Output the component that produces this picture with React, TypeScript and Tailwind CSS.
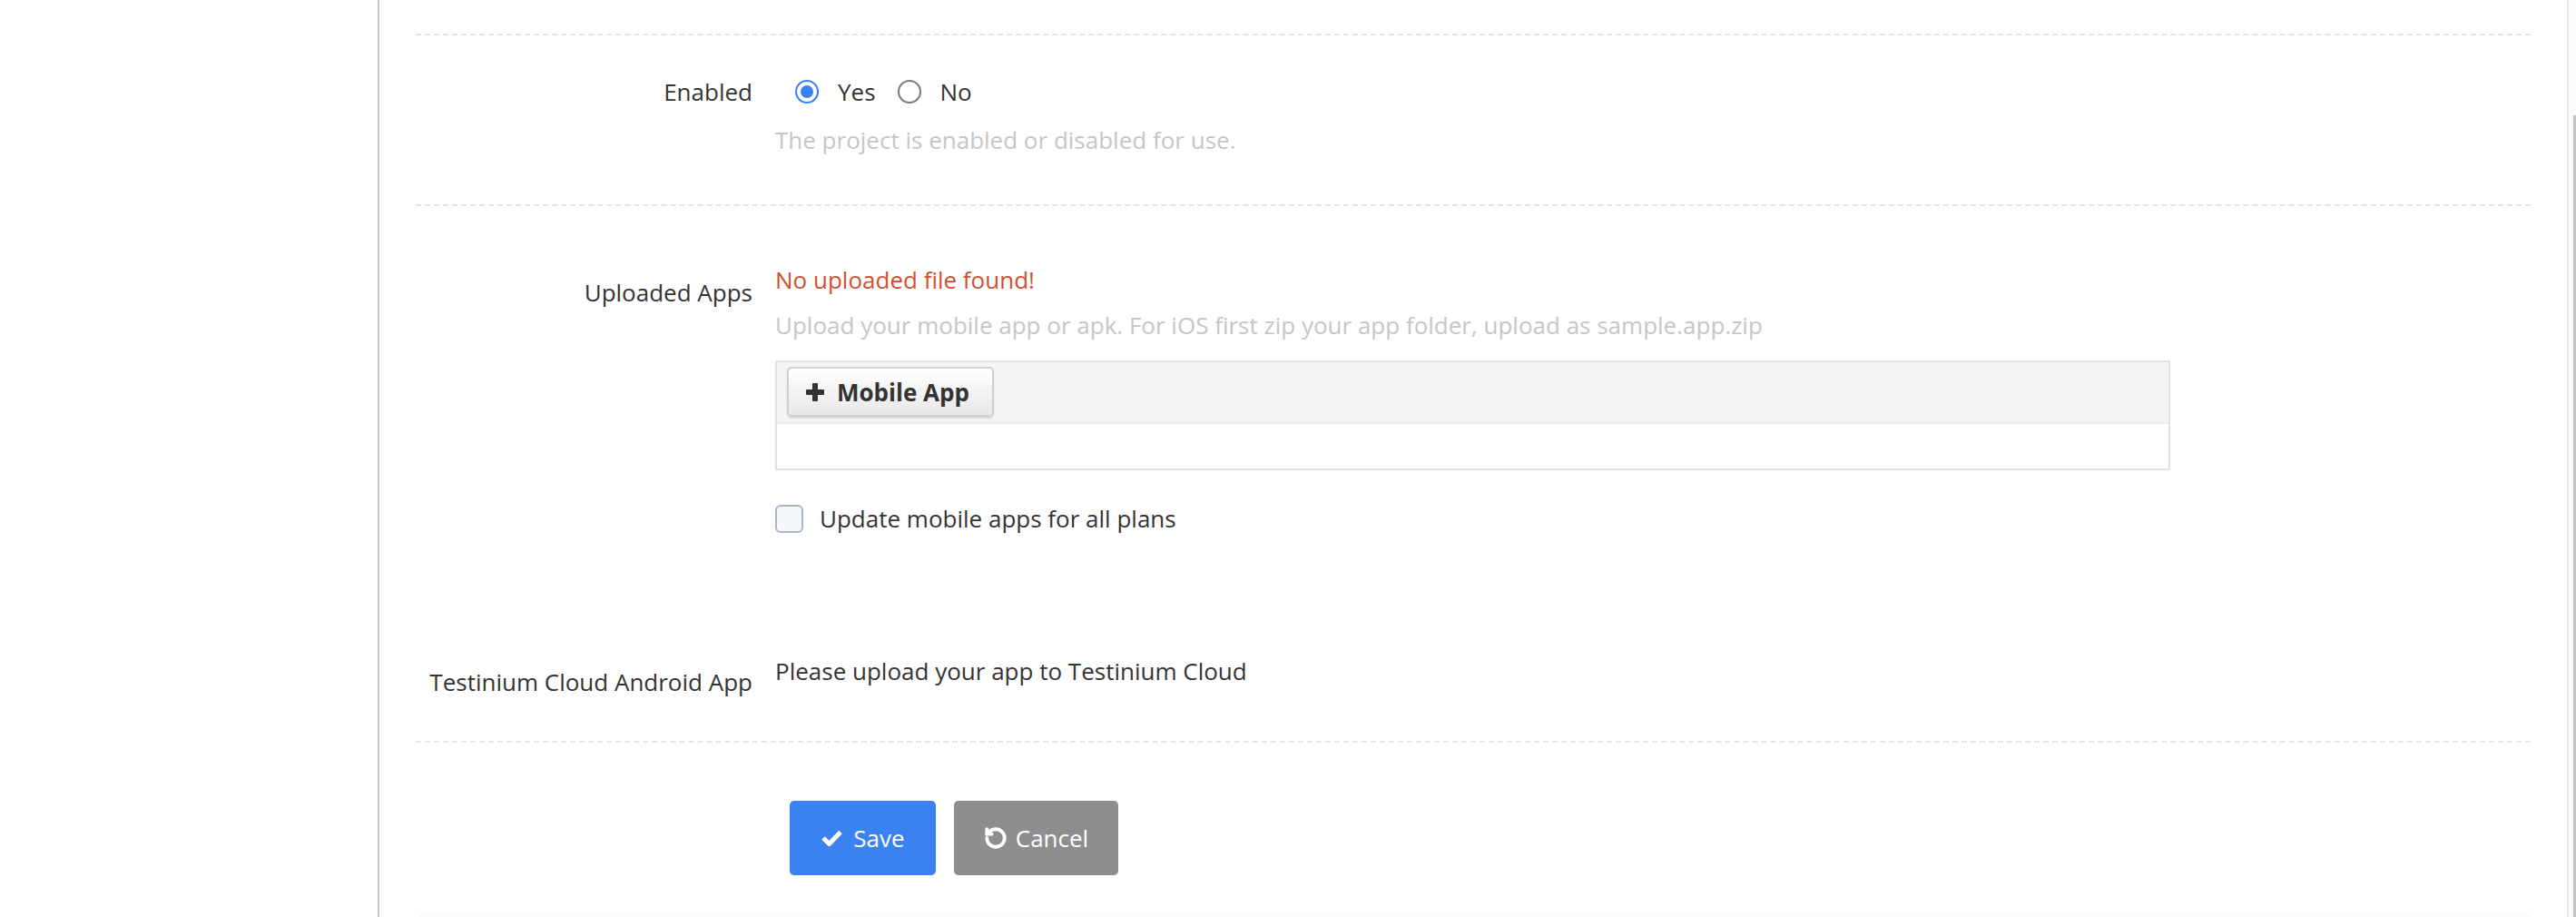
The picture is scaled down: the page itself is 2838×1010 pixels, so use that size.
import { RotateCcw } from 'lucide-react'

function Divider() {
  return <div className="border-b-2 border-dashed border-[#e6e6e6]" />
}

function Row({ label, labelOffset, children }: { label: string; labelOffset: string; children: React.ReactNode }) {
  return (
    <div className="flex gap-[25px]">
      <div className={`w-[371px] shrink-0 text-right ${labelOffset}`}>{label}</div>
      <div className="min-w-0 flex-1">{children}</div>
    </div>
  )
}

function Radio({ checked, label }: { checked?: boolean; label: string }) {
  return (
    <label className="flex items-center">
      <span
        className={`flex h-[26px] w-[26px] items-center justify-center rounded-full border-2 bg-white ${
          checked ? 'border-[#3b7ff2]' : 'border-[#7a7a7a]'
        }`}
      >
        {checked && <span className="h-[14px] w-[14px] rounded-full bg-[#3b7ff2]" />}
      </span>
      <span className="ml-[21px]">{label}</span>
    </label>
  )
}

export default function App() {
  return (
    <div className="flex h-[1010px] w-full overflow-hidden bg-white font-['Open_Sans',sans-serif] text-[26px] leading-[36px] text-[#333]">
      <aside className="w-[418px] shrink-0 border-r-2 border-[#c8c8c8] bg-white" />

      <main className="flex min-w-0 flex-1 flex-col px-[40px]">
        <div className="h-[37px]" />
        <Divider />

        {/* Enabled */}
        <div className="pt-[44px] pb-[53px]">
          <Row label="Enabled" labelOffset="">
            <div className="ml-[22px] flex items-center gap-[24px]">
              <Radio checked label="Yes" />
              <Radio label="No" />
            </div>
            <p className="mt-[17px] text-[#c6c6c6]">The project is enabled or disabled for use.</p>
          </Row>
        </div>
        <Divider />

        {/* Uploaded apps */}
        <div className="pt-[63px]">
          <Row label="Uploaded Apps" labelOffset="mt-[14px]">
            <p className="text-[#d2502f]">No uploaded file found!</p>
            <p className="mt-[14px] text-[#c6c6c6]">
              Upload your mobile app or apk. For iOS first zip your app folder, upload as sample.app.zip
            </p>
            <div className="mt-[21px] w-[1537px] border-2 border-[#e2e2e2]">
              <div className="h-[68px] border-b-2 border-[#ececec] bg-[#f4f4f4] px-[11px] pt-[5px]">
                <button className="flex h-[55px] w-[228px] items-center gap-[14px] rounded-[5px] border-2 border-[#d0d0d0] bg-gradient-to-b from-white to-[#e8e8e8] pl-[19px] font-bold text-[#333] shadow-[0_2px_2px_rgba(0,0,0,0.12)]">
                  <svg width="20" height="20" viewBox="0 0 20 20" fill="#333">
                    <rect x="7" y="0" width="6" height="20" rx="1" />
                    <rect x="0" y="7" width="20" height="6" rx="1" />
                  </svg>
                  Mobile App
                </button>
              </div>
              <div className="h-[49px] bg-white" />
            </div>
            <label className="mt-[35px] flex items-center gap-[18px]">
              <span className="h-[31px] w-[31px] rounded-[6px] border-2 border-[#aab6c6] bg-[#f4f7fc]" />
              <span>Update mobile apps for all plans</span>
            </label>
          </Row>
        </div>

        {/* Testinium cloud */}
        <div className="pt-[132px] pb-[47px]">
          <Row label="Testinium Cloud Android App" labelOffset="mt-[12px]">
            <p>Please upload your app to Testinium Cloud</p>
          </Row>
        </div>
        <Divider />

        <div className="flex gap-[20px] pt-[64px] pl-[412px]">
          <button className="flex h-[82px] w-[161px] items-center justify-center gap-[11px] rounded-[5px] bg-[#3a82ef] text-white">
            <svg width="25" height="20" viewBox="0 0 25 20" fill="none" stroke="white" strokeWidth="5" strokeLinejoin="round">
              <path d="M3 10l6.5 6.5L22 3.5" />
            </svg>
            Save
          </button>
          <button className="flex h-[82px] w-[181px] items-center justify-center gap-[9px] rounded-[5px] bg-[#8e8e8e] text-white">
            <RotateCcw size={26} strokeWidth={3.5} />
            Cancel
          </button>
        </div>
        <div className="flex-1" />
        <div className="ml-[4px] h-[5px] bg-[#fbfbfb]" />
      </main>

      <div className="flex w-[10px] shrink-0 justify-end border-l-2 border-[#e8e8e8] bg-[#fbfbfb]">
        <div className="mt-[127px] h-[883px] w-[3px] bg-[#c4c4c4]" />
      </div>
    </div>
  )
}
